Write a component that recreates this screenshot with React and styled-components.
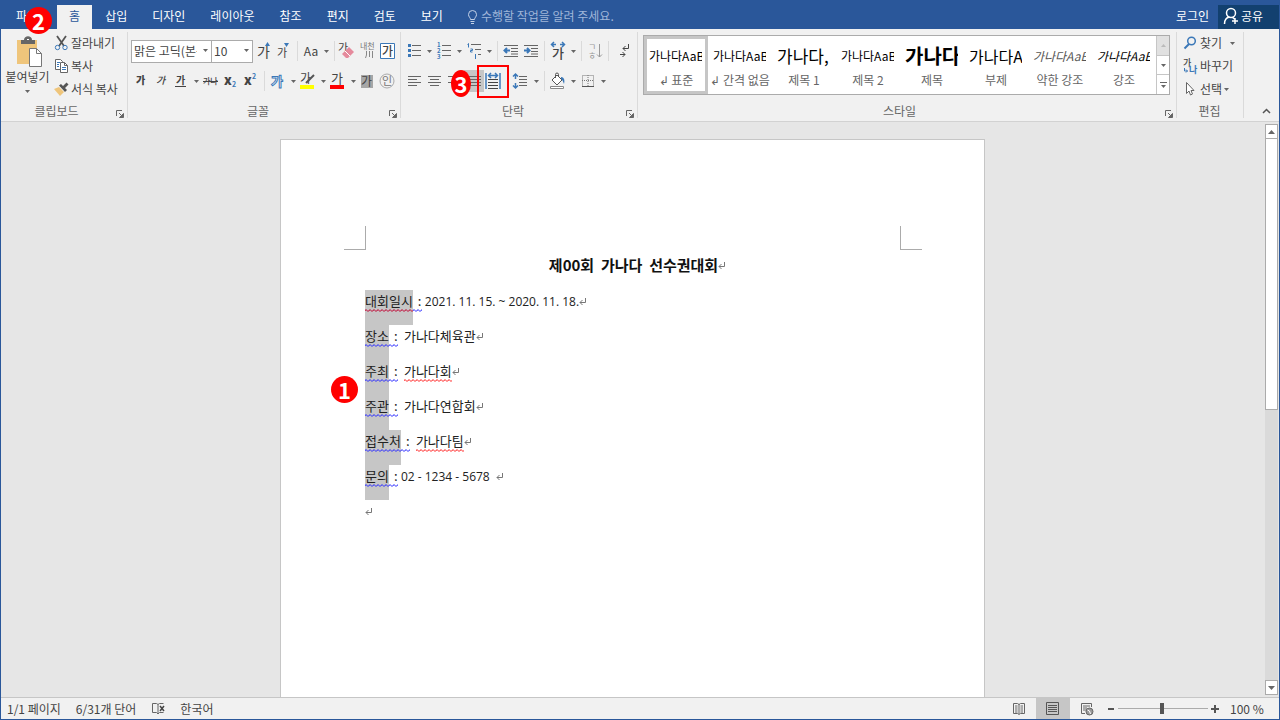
import styled, { createGlobalStyle } from 'styled-components'

const GlobalStyle = createGlobalStyle`
  * {
    box-sizing: border-box;
  }
  body {
    margin: 0;
    font-family: 'Noto Sans CJK KR', 'Open Sans', sans-serif;
    font-size: 12px;
    line-height: 16px;
    color: #444;
  }
  button, select, input {
    font: inherit;
    color: inherit;
  }
  button {
    display: flex;
    align-items: center;
    justify-content: center;
    border: 0;
    padding: 0;
    background: none;
    white-space: nowrap;
  }
`

const BLUE = '#3b78b8'

/* ---------- window ---------- */

const Window = styled.div`
  display: flex;
  flex-direction: column;
  height: 100vh;
  border: 1px solid #2a579a;
  border-top: 0;
  background: #e6e6e6;
  overflow: hidden;
`

const TabBar = styled.nav`
  display: flex;
  align-items: stretch;
  gap: 1px;
  height: 29px;
  padding-top: 5px;
  flex: none;
  background: #2a579a;
  color: #fff;

  button {
    padding-bottom: 2px;
  }
`

const Tab = styled.button`
  position: relative;
  padding: ${p => (p.$file ? '0 18px 0 15px' : '0 12px')};
  background: ${p => (p.$active ? '#f1f1f1' : 'transparent')};
  color: ${p => (p.$active ? '#2a579a' : '#fff')};
`

const TellMe = styled.button`
  gap: 3px;
  padding: 0 11px;
  color: #a0b6d9;
`

const Login = styled.button`
  margin-left: auto;
  padding: 0 8px;
`

const Share = styled.button`
  justify-content: flex-start;
  gap: 2px;
  width: 61px;
  padding-left: 5px;
  background: #12406f;
`

const Badge = styled.span`
  position: absolute;
  z-index: 2;
  left: ${p => p.$left}px;
  top: ${p => p.$top}px;
  width: ${p => p.$width || 27}px;
  height: 27px;
  border-radius: 50%;
  background: #f00;
  color: #fff;
  font-size: 22px;
  font-weight: 700;
  line-height: 27px;
  text-align: center;
`

/* ---------- ribbon ---------- */

const Ribbon = styled.header`
  display: flex;
  flex: none;
  height: 93px;
  padding: 3px 0;
  background: #f1f1f1;
  border-bottom: 1px solid #d2d2d2;
`

const Group = styled.section`
  display: flex;
  flex-direction: column;
  flex: ${p => (p.$grow ? '1 1 0' : 'none')};
  width: ${p => (p.$width ? p.$width + 'px' : 'auto')};
  min-width: 0;
  padding-left: ${p => p.$pad || 0}px;
  border-right: 1px solid #dadada;
`

const GroupBody = styled.div`
  display: flex;
  flex: 1;
  min-height: 0;
`

const GroupFooter = styled.div`
  display: flex;
  align-items: center;
  height: 16px;
  padding: 2px 3px 0 0;
  color: #666;

  button {
    align-self: flex-end;
  }
`

const GroupTitle = styled.span`
  flex: 1;
  padding-right: 4px;
  text-align: center;
`

const ToolRows = styled.div`
  display: flex;
  flex-direction: column;
  gap: 8px;
  padding-top: 8px;
`

const ToolRow = styled.div`
  display: flex;
  align-items: center;
  height: 22px;
`

const Tool = styled.button`
  position: relative;
  width: 20px;
  height: 22px;
  background: ${p => (p.$pressed ? '#c6c6c6' : 'transparent')};
`

const DropButton = styled.button`
  width: 10px;
  height: 22px;
`

const Divider = styled.span`
  width: 1px;
  height: 20px;
  margin: 0 3px;
  background: #dadada;
`

const SelectBox = styled.span`
  position: relative;
  width: ${p => p.$width}px;
  margin-right: ${p => (p.$joined ? -1 : 1)}px;

  svg {
    position: absolute;
    right: 4px;
    top: 9px;
    pointer-events: none;
  }
`

const Select = styled.select`
  appearance: none;
  display: block;
  width: 100%;
  height: 23px;
  padding: 0 14px 0 2px;
  border: 1px solid #ababab;
  border-radius: 0;
  background: #fff;
  overflow: hidden;
`

const PasteButton = styled.button`
  flex-direction: column;
  justify-content: flex-start;
  width: 53px;
  padding-top: 4px;
`

const ActionList = styled.div`
  display: flex;
  flex-direction: column;
  gap: 1px;
`

const Action = styled.button`
  justify-content: flex-start;
  gap: 2px;
  height: 22px;

  svg:last-child {
    margin-left: ${p => p.$arrowGap || 0}px;
  }
`

const MarkedTool = styled.span`
  position: relative;
  display: flex;
`

const MarkFrame = styled.span`
  position: absolute;
  z-index: 1;
  left: -7px;
  top: -5px;
  width: 32px;
  height: 33px;
  border: 2px solid #f00;
  pointer-events: none;
`

/* ---------- style gallery ---------- */

const Gallery = styled.div`
  display: flex;
  flex: 1;
  height: 60px;
  min-width: 0;
  margin: 3px 6px 0 5px;
  border: 1px solid #ababab;
  background: #fff;
`

const GalleryItems = styled.div`
  display: flex;
  flex: 1;
  min-width: 0;
  overflow: hidden;
`

const StyleCard = styled.button`
  flex-direction: column;
  justify-content: flex-start;
  flex: none;
  width: 64px;
  padding-top: 1px;
  border: 3px solid ${p => (p.$selected ? '#c6c6c6' : 'transparent')};
`

const Preview = styled.span`
  align-self: flex-start;
  width: 53px;
  height: 32px;
  margin-left: 2px;
  overflow: hidden;
  text-align: left;
  line-height: 32px;
  color: ${p => p.$color || '#000'};
  font-size: ${p => p.$size || 12}px;
  font-weight: ${p => (p.$bold ? 700 : 400)};
  font-style: ${p => (p.$italic ? 'italic' : 'normal')};
`

const StyleName = styled.span`
  color: #666;
`

const GalleryScroll = styled.div`
  display: flex;
  flex-direction: column;
  width: 13px;
  border-left: 1px solid #c6c6c6;

  button {
    flex: 1;
  }
  button:first-child {
    background: #e1e1e1;
  }
  button + button {
    border-top: 1px solid #c6c6c6;
  }
`

const Collapse = styled.button`
  align-self: flex-end;
  width: 35px;
  height: 14px;
  padding-left: 10px;
`

/* ---------- document ---------- */

const Workspace = styled.main`
  display: flex;
  flex: 1;
  min-height: 0;
`

const Canvas = styled.div`
  display: flex;
  flex: 1;
  justify-content: center;
  padding-top: 17px;
  overflow: hidden;
`

const Page = styled.article`
  width: 705px;
  border: 1px solid #c6c6c6;
  border-bottom: 0;
  background: #fff;
  color: #222;
`

const CropMarks = styled.div`
  display: flex;
  justify-content: space-between;
  padding: 86px 62px 0 63px;
`

const CropMark = styled.span`
  width: 22px;
  height: 24px;
  border-bottom: 1px solid #ababab;
  border-${p => p.$side}: 1px solid #ababab;
`

const PageTitle = styled.h1`
  display: flex;
  justify-content: center;
  margin: 0 0 10px;
  padding-left: 10px;
  font-size: 15px;
  font-weight: 700;
  line-height: 30px;
  white-space: pre;
  color: #111;

  svg {
    margin-top: 12px;
  }
`

const Lines = styled.div`
  position: relative;
  padding: 0 84px;
`

const Line = styled.p`
  display: flex;
  height: 35px;
  margin: 0;
  font-size: 13px;
  line-height: 22px;
  white-space: pre;
`

const Label = styled.span`
  height: 35px;
  background: #c6c6c6;
`

// zigzag proofing underline
const wave = color =>
  `url("data:image/svg+xml,${encodeURIComponent(
    `<svg xmlns="http://www.w3.org/2000/svg" width="4" height="3"><path d="M-1 3L1 .5 3 2.500 5 .5" fill="none" stroke="${color}"/></svg>`
  )}")`

const Proof = styled.span`
  display: block;
  height: 22px;
  background: ${p => wave(p.$color)} 0 100% repeat-x;
`

const Colon = styled(Proof)`
  width: 9px;
  padding-left: 5px;
  margin-right: ${p => p.$gap}px;
`

const Value = styled.span`
  font-family: ${p => (p.$digits ? "'Open Sans', sans-serif" : 'inherit')};
  font-size: ${p => (p.$digits ? 12 : 13)}px;
  line-height: ${p => (p.$digits ? 24 : 22)}px;
`

const ParagraphMark = styled.svg`
  flex: none;
  align-self: flex-start;
  display: inline-block;
  margin-top: 8px;
`

/* ---------- scrollbar and status bar ---------- */

const ScrollBar = styled.div`
  display: flex;
  flex-direction: column;
  width: 15px;
  padding: 2px 1px;

  button {
    height: 15px;
    border: 1px solid #ababab;
    background: #fff;
  }
`

const ScrollTrack = styled.div`
  flex: 1;
  background: #dadada;
`

const ScrollThumb = styled.div`
  height: 50%;
  border: 1px solid #ababab;
  border-top: 0;
  background: #fff;
`

const StatusBar = styled.footer`
  display: flex;
  align-items: center;
  flex: none;
  height: 22px;
  padding-left: 6px;
  border-top: 1px solid #c6c6c6;
  background: #f1f1f1;
`

const StatusItem = styled.span`
  margin-right: 15px;
`

const ProofButton = styled.button`
  margin-right: 14px;
`

const Views = styled.div`
  display: flex;
  align-self: stretch;
  margin-left: auto;
`

const ViewButton = styled.button`
  width: 34px;
  background: ${p => (p.$active ? '#c6c6c6' : 'transparent')};
`

const Zoom = styled.div`
  display: flex;
  align-items: center;
  gap: 2px;
  margin-left: 2px;
`

const ZoomStep = styled.button`
  width: 10px;
  height: 16px;
`

const ZoomSlider = styled.input`
  appearance: none;
  width: 90px;
  height: 12px;
  margin: 0;
  background: linear-gradient(#ababab, #ababab) center / 100% 1px no-repeat;

  &::-webkit-slider-thumb {
    appearance: none;
    width: 4px;
    height: 11px;
    background: #555;
  }
`

const ZoomValue = styled.span`
  width: 57px;
  padding-left: 8px;
`

/* ---------- icons ---------- */

const Icon = ({ size = 20, w, h, children }) => (
  <svg width={w || size} height={h || size} viewBox={`0 0 ${w || size} ${h || size}`} fill="none" stroke="#666" overflow="visible" aria-hidden="true">
    {children}
  </svg>
)

const Glyph = ({ x, y, size = 12, color = '#444', weight = 400, children, ...rest }) => (
  <text x={x} y={y} fontSize={size} fill={color} stroke="none" fontWeight={weight} {...rest}>{children}</text>
)

const Arrow = ({ up, large, color = '#666' }) => (
  <svg width={large ? 7 : 5} height={large ? 4 : 3} viewBox="0 0 5 3" preserveAspectRatio="none" aria-hidden="true">
    <path d={up ? 'M0 3h5L2.5 0z' : 'M0 0h5L2.5 3z'} fill={color} />
  </svg>
)

const Launcher = () => (
  <Icon size={8}>
    <path d="M.5 6V.5H6" />
    <path d="M3 3l3 3" />
    <path d="M7.500 3.500v4h-4z" fill="#666" />
  </Icon>
)

const Return = () => (
  <ParagraphMark width="8" height="8" viewBox="0 0 8 8" fill="none" stroke="#777" aria-hidden="true">
    <path d="M6.500 0v4.500H1M3.500 2L1 4.500 3.500 7" />
  </ParagraphMark>
)

const PasteIcon = () => (
  <Icon w={31} h={33}>
    <path d="M5 4h20v24H5z" fill="#efc57b" stroke="none" />
    <path d="M9 8V4h3c0-5 8-5 8 0h3v4z" fill="#666" stroke="none" />
    <path d="M15 3.500h2" stroke="#fff" />
    <path d="M17.500 12.500h7l5 5v13h-12z" fill="#fff" stroke="#777" />
    <path d="M24.500 12.500v5h5" stroke="#777" />
  </Icon>
)

const CutIcon = () => (
  <Icon w={15} h={16}>
    <path d="M3 1l7 10M12 1L5 11" stroke="#555" strokeWidth="1.800" />
    <circle cx="3.500" cy="12.500" r="2.200" stroke={BLUE} />
    <circle cx="11" cy="12.500" r="2.200" stroke={BLUE} />
  </Icon>
)

const CopyIcon = () => (
  <Icon w={15} h={16}>
    <path d="M1.500 1.500h5l2 2v8h-7z" fill="#fff" />
    <path d="M6.500 4.500h4l3 3v7h-7z" fill="#fff" />
    <path d="M10.500 4.500v3h3" />
    <path d="M3 4.500h3M3 6.500h2M3 8.500h2M8 9.500h4M8 11.500h4" stroke={BLUE} />
  </Icon>
)

const BrushIcon = () => (
  <Icon w={15} h={16}>
    <path d="M0 8l5-2 5 5-4 4z" fill="#efc57b" stroke="none" />
    <path d="M5 4.500L11 11l2-2-2-2 3.500-3.500L12.500 1.500 9 5 7 3z" fill="#555" stroke="none" />
  </Icon>
)

const Bulb = () => (
  <Icon w={11} h={15}>
    <path d="M3.500 10.500c0-2-2-2.500-2-5a4 4 0 018 0c0 2.500-2 3-2 5zM3.500 12.500h4M4 14.500h3" stroke="#c3d1e7" />
  </Icon>
)

const PersonIcon = () => (
  <Icon w={16} h={18}>
    <circle cx="8" cy="6" r="4.500" stroke="#fff" strokeWidth="1.500" />
    <path d="M1.500 17c0-4 2-6.500 5-7M9.500 10.500c1 .3 1.500.8 2 1.500M12 11v6M9 14h6" stroke="#fff" strokeWidth="1.500" />
  </Icon>
)

const AlignIcon = ({ rows }) => (
  <Icon>
    {rows.map(([from, to], i) => (
      <path key={i} d={`M${from} ${5.5 + i * 3}H${to}`} />
    ))}
  </Icon>
)

const ListIcon = ({ kind }) => (
  <Icon>
    {kind === 'bullet' && (
      <>
        <path d="M8 4.500h9M8 9.500h9M8 14.500h9" />
        <path d="M4 4.500h3M4 9.500h3M4 14.500h3" stroke={BLUE} strokeWidth="3" />
      </>
    )}
    {kind === 'number' && (
      <>
        <path d="M8 4.500h9M8 9.500h9M8 14.500h9" />
        <Glyph x="3" y="6" size={6} color={BLUE} weight={700}>1</Glyph>
        <Glyph x="3" y="12" size={6} color={BLUE} weight={700}>2</Glyph>
        <Glyph x="3" y="18" size={6} color={BLUE} weight={700}>3</Glyph>
      </>
    )}
    {kind === 'multi' && (
      <>
        <path d="M7 3.500h10M11 8.500h6M14 13.500h3" />
        <path d="M3.500 3.500l1-1v4M6.500 8h2v1.500h-2v1.500h2M11.500 13v5" stroke={BLUE} />
      </>
    )}
  </Icon>
)

const IndentIcon = ({ out }) => (
  <Icon>
    <path d="M3 4.500h14M10 7.500h7M10 10.500h7M10 13h7M3 15.500h14" />
    <path d={out ? 'M9 9.500H4M6 7L3.500 9.500 6 12' : 'M3 9.500h5M6 7l2.500 2.500L6 12'} stroke={BLUE} strokeWidth="2" />
  </Icon>
)

const Drop = ({ label }) => (
  <DropButton aria-label={label}><Arrow /></DropButton>
)

/* ---------- groups ---------- */

const Footer = ({ title, launcher = true }) => (
  <GroupFooter>
    <GroupTitle>{title}</GroupTitle>
    {launcher && <button aria-label={title + ' 설정'}><Launcher /></button>}
  </GroupFooter>
)

const ClipboardGroup = () => (
  <Group $width={127}>
    <GroupBody>
      <PasteButton>
        <PasteIcon />
        붙여넣기
        <Icon w={5} h={10}><path d="M0 5h5L2.500 8z" fill="#666" stroke="none" /></Icon>
      </PasteButton>
      <ActionList>
        <Action><CutIcon />잘라내기</Action>
        <Action><CopyIcon />복사</Action>
        <Action><BrushIcon />서식 복사</Action>
      </ActionList>
    </GroupBody>
    <Footer title="클립보드" />
  </Group>
)

const FontGroup = () => (
  <Group $width={273} $pad={3}>
    <GroupBody>
      <ToolRows>
        <ToolRow>
          <SelectBox $width={81} $joined>
            <Select aria-label="글꼴"><option>맑은 고딕(본문)</option></Select>
            <Arrow />
          </SelectBox>
          <SelectBox $width={42}>
            <Select aria-label="글꼴 크기"><option>10</option></Select>
            <Arrow />
          </SelectBox>
          <Tool aria-label="글꼴 크게">
            <Icon><Glyph x="3" y="16" size={14}>가</Glyph><path d="M11 5h5l-2.500-4z" fill={BLUE} stroke="none" /></Icon>
          </Tool>
          <Tool aria-label="글꼴 작게">
            <Icon><Glyph x="3" y="16" size={11}>가</Glyph><path d="M10 2h5l-2.500 4z" fill={BLUE} stroke="none" /></Icon>
          </Tool>
          <Divider />
          <Tool aria-label="대/소문자 바꾸기">Aa</Tool>
          <Drop label="대/소문자 옵션" />
          <Divider />
          <Tool aria-label="서식 지우기">
            <Icon>
              <Glyph x="0" y="11" size={11}>가</Glyph>
              <path d="M4 13l7-7 5 5-6 6H8l-4-4z" fill="#e58a9c" stroke="none" />
              <path d="M7 10l5 5" stroke="#fff" />
            </Icon>
          </Tool>
          <Tool aria-label="윗주 달기">
            <Icon><Glyph x="2" y="8" size={8} color="#777">내천</Glyph><path d="M8.500 10v4l-1 3M11.500 10v6M14.500 10v7" stroke="#888" /></Icon>
          </Tool>
          <Tool aria-label="문자 테두리">
            <Icon><path d="M2.500 2.500h14v15h-14z" fill="#fff" stroke={BLUE} /><Glyph x="4" y="15" size={12} weight={500}>가</Glyph></Icon>
          </Tool>
        </ToolRow>
        <ToolRow>
          <Tool aria-label="굵게"><Icon><Glyph x="5" y="13" size={10} weight={900}>가</Glyph></Icon></Tool>
          <Tool aria-label="기울임꼴"><Icon><Glyph x="5" y="13" size={10} weight={500} fontStyle="italic">가</Glyph></Icon></Tool>
          <Tool aria-label="밑줄">
            <Icon><Glyph x="5" y="13" size={10} weight={700}>가</Glyph><path d="M4 15.500h11" stroke="#444" /></Icon>
          </Tool>
          <Drop label="밑줄 옵션" />
          <Tool aria-label="취소선">
            <Icon><Glyph x="2" y="13" size={8} weight={500}>가나</Glyph><path d="M2 10.500h15" stroke="#444" /></Icon>
          </Tool>
          <Tool aria-label="아래 첨자">
            <Icon><Glyph x="3" y="14" size={13} weight={900}>x</Glyph><Glyph x="11" y="16" size={7} weight={700} color={BLUE}>2</Glyph></Icon>
          </Tool>
          <Tool aria-label="위 첨자">
            <Icon><Glyph x="3" y="14" size={13} weight={900}>x</Glyph><Glyph x="11" y="8" size={7} weight={700} color={BLUE}>2</Glyph></Icon>
          </Tool>
          <Divider />
          <Tool aria-label="텍스트 효과">
            <Icon><text x="3" y="15" fontSize="13" fontWeight="700" fill="#fff" stroke={BLUE}>가</text></Icon>
          </Tool>
          <Drop label="텍스트 효과 옵션" />
          <Tool aria-label="텍스트 강조 색">
            <Icon>
              <Glyph x="2" y="12" size={12}>가</Glyph>
              <path d="M8 12l8-8" stroke="#555" strokeWidth="2" />
              <path d="M2 14h14v4H2z" fill="#ff0" stroke="none" />
            </Icon>
          </Tool>
          <Drop label="강조 색 옵션" />
          <Tool aria-label="글꼴 색">
            <Icon><Glyph x="3" y="12" size={13}>가</Glyph><path d="M2 14h14v4H2z" fill="#f00" stroke="none" /></Icon>
          </Tool>
          <Drop label="글꼴 색 옵션" />
          <Tool aria-label="문자 음영">
            <Icon><path d="M3 4h12v13H3z" fill="#a6a6a6" stroke="none" /><Glyph x="3" y="15" size={12}>가</Glyph></Icon>
          </Tool>
          <Tool aria-label="원 문자">
            <Icon><circle cx="9" cy="10" r="7" stroke="#aaa" /><Glyph x="4" y="14" size={11} color="#777">인</Glyph></Icon>
          </Tool>
        </ToolRow>
      </ToolRows>
    </GroupBody>
    <Footer title="글꼴" />
  </Group>
)

const ParagraphGroup = () => (
  <Group $width={237} $pad={3}>
    <GroupBody>
      <ToolRows>
        <ToolRow>
          <Tool aria-label="글머리 기호"><ListIcon kind="bullet" /></Tool>
          <Drop label="글머리 기호 옵션" />
          <Tool aria-label="번호 매기기"><ListIcon kind="number" /></Tool>
          <Drop label="번호 옵션" />
          <Tool aria-label="다단계 목록"><ListIcon kind="multi" /></Tool>
          <Drop label="다단계 옵션" />
          <Divider />
          <Tool aria-label="내어쓰기"><IndentIcon out /></Tool>
          <Tool aria-label="들여쓰기"><IndentIcon /></Tool>
          <Divider />
          <Tool aria-label="한글 입력 체계">
            <Icon>
              <Glyph x="4" y="17" size={13} weight={500}>가</Glyph>
              <path d="M8 3.500H4M6 1L3.500 3.500 6 6M12 3.500h4M14 1l2.500 2.500L14 6" stroke={BLUE} strokeWidth="1.500" />
            </Icon>
          </Tool>
          <Drop label="한글 입력 체계 옵션" />
          <Divider />
          <Tool aria-label="정렬">
            <Icon>
              <Glyph x="3" y="9" size={9} color="#999">ㄱ</Glyph>
              <Glyph x="3" y="18" size={9} color="#999">ㅎ</Glyph>
              <path d="M14.500 3v13M12 13.500l2.500 2.500 2.500-2.500" stroke="#999" />
            </Icon>
          </Tool>
          <Divider />
          <Tool aria-label="편집 기호 표시">
            <Icon><path d="M16.500 3v4.500H11M13.500 5L11 7.500l2.500 2.500M8 13.500h5M10.500 11l2.500 2.500-2.500 2.500" stroke="#444" /></Icon>
          </Tool>
        </ToolRow>
        <ToolRow>
          <Tool aria-label="왼쪽 맞춤"><AlignIcon rows={[[4, 17], [4, 13], [4, 17], [4, 13]]} /></Tool>
          <Tool aria-label="가운데 맞춤"><AlignIcon rows={[[4, 17], [6, 15], [4, 17], [6, 15]]} /></Tool>
          <Tool aria-label="오른쪽 맞춤"><AlignIcon rows={[[4, 17], [8, 17], [4, 17], [8, 17]]} /></Tool>
          <Tool $pressed aria-label="양쪽 맞춤"><AlignIcon rows={[[4, 17], [4, 17], [4, 17], [4, 17]]} /></Tool>
          <MarkedTool>
            <Tool aria-label="균등 분할">
              <Icon>
                <path d="M2 2v16M16 2v16M5 4.500h8M7 2L4.500 4.500 7 7M11 2l2.500 2.500L11 7" stroke={BLUE} strokeWidth="1.500" />
                <path d="M4 8.500h10M4 11.500h10M4 14.500h10M4 17.500h10" stroke="#444" />
              </Icon>
            </Tool>
            <MarkFrame />
            <Badge $left={-33} $top={0} $width={20}>3</Badge>
          </MarkedTool>
          <Divider />
          <Tool aria-label="줄 간격">
            <Icon>
              <path d="M8 5.500h8M8 8.500h8M8 11.500h8M8 14.500h8" />
              <path d="M4.500 3v5M2 5.500L4.500 3 7 5.500M4.500 12v5M2 14.500L4.500 17 7 14.500" stroke={BLUE} strokeWidth="1.500" />
            </Icon>
          </Tool>
          <Drop label="줄 간격 옵션" />
          <Divider />
          <Tool aria-label="음영">
            <Icon>
              <path d="M4 9l5-5 5 5-5 5z" fill="#fff" stroke="#555" />
              <path d="M7.500 7V3.500a1.500 1.500 0 013 0V6" stroke="#555" />
              <path d="M13 6c3 0 4 3 3 7-1-2-1-4-3-5z" fill={BLUE} stroke="none" />
              <path d="M2.500 15.500h13v2h-13z" stroke="#888" fill="#fff" />
            </Icon>
          </Tool>
          <Drop label="음영 옵션" />
          <Tool aria-label="테두리">
            <Icon>
              <path d="M4.500 4.500h11v11h-11zM10 4v11M4 9.500h12" stroke="#777" strokeDasharray="1 1" />
              <path d="M4 15.500h12" stroke="#555" />
            </Icon>
          </Tool>
          <Drop label="테두리 옵션" />
        </ToolRow>
      </ToolRows>
    </GroupBody>
    <Footer title="단락" />
  </Group>
)

const styles = [
  { name: '↲ 표준', sample: '가나다AaBb', selected: true },
  { name: '↲ 간격 없음', sample: '가나다AaBb' },
  { name: '제목 1', sample: '가나다,', size: 17 },
  { name: '제목 2', sample: '가나다AaBb' },
  { name: '제목', sample: '가나다', size: 20, bold: true },
  { name: '부제', sample: '가나다A', size: 16 },
  { name: '약한 강조', sample: '가나다AaBb', italic: true, color: '#555' },
  { name: '강조', sample: '가나다AaBb', italic: true },
]

const StylesGroup = () => (
  <Group $grow>
    <GroupBody>
      <Gallery>
        <GalleryItems>
          {styles.map(s => (
            <StyleCard key={s.name} $selected={s.selected}>
              <Preview $size={s.size} $bold={s.bold} $italic={s.italic} $color={s.color}>{s.sample}</Preview>
              <StyleName>{s.name}</StyleName>
            </StyleCard>
          ))}
        </GalleryItems>
        <GalleryScroll>
          <button aria-label="위로"><Arrow up color="#bbb" /></button>
          <button aria-label="아래로"><Arrow /></button>
          <button aria-label="자세히">
            <Icon w={7} h={8}><path d="M0 1.500h7" /><path d="M1 4h5L3.500 7z" fill="#666" stroke="none" /></Icon>
          </button>
        </GalleryScroll>
      </Gallery>
    </GroupBody>
    <Footer title="스타일" />
  </Group>
)

const EditGroup = () => (
  <Group $width={67} $pad={6}>
    <GroupBody>
      <ActionList>
        <Action $arrowGap={6}>
          <Icon w={15} h={16}>
            <circle cx="8.500" cy="6" r="3.800" stroke={BLUE} strokeWidth="1.500" />
            <path d="M6 9l-4.500 4.500" stroke={BLUE} strokeWidth="2" />
          </Icon>
          찾기
          <Arrow />
        </Action>
        <Action>
          <Icon w={15} h={16}>
            <Glyph x="0" y="8" size={9} weight={500}>가</Glyph>
            <Glyph x="6" y="15" size={9} weight={700} color={BLUE}>나</Glyph>
            <path d="M1.500 10v3h3M3 11.500L4.500 13 3 14.500" stroke={BLUE} />
          </Icon>
          <span>바꾸기</span>
        </Action>
        <Action>
          <Icon w={15} h={16}><path d="M3.500 1.500v11l2.500-2.500 1.500 4 2-1L8 9.500h3z" fill="#fff" /></Icon>
          선택
          <Arrow />
        </Action>
      </ActionList>
    </GroupBody>
    <Footer title="편집" launcher={false} />
  </Group>
)

/* ---------- document content ---------- */

const lines = [
  { label: '대회일시', value: '2021. 11. 15. ~ 2020. 11. 18.', digits: true, spelling: '#c00030' },
  { label: '장소', value: '가나다체육관' },
  { label: '주최', value: '가나다회', wrong: true },
  { label: '주관', value: '가나다연합회' },
  { label: '접수처', value: '가나다팀', wrong: true },
  { label: '문의', value: '02 - 1234 - 5678  ', digits: true },
]

const GRAMMAR = '#2b2bff'

const tabs = ['홈', '삽입', '디자인', '레이아웃', '참조', '편지', '검토', '보기']

const App = () => (
  <>
    <GlobalStyle />
    <Window>
      <TabBar>
        <Tab $file>
          파일
          <Badge $left={24} $top={2}>2</Badge>
        </Tab>
        {tabs.map(t => <Tab key={t} $active={t === '홈'}>{t}</Tab>)}
        <TellMe><Bulb />수행할 작업을 알려 주세요.</TellMe>
        <Login>로그인</Login>
        <Share><PersonIcon />공유</Share>
      </TabBar>

      <Ribbon>
        <ClipboardGroup />
        <FontGroup />
        <ParagraphGroup />
        <StylesGroup />
        <EditGroup />
        <Collapse aria-label="리본 메뉴 축소">
          <Icon w={9} h={6}><path d="M1 5l3.500-3.500L8 5" stroke="#555" strokeWidth="1.500" /></Icon>
        </Collapse>
      </Ribbon>

      <Workspace>
        <Canvas>
          <Page>
            <CropMarks>
              <CropMark $side="right" />
              <CropMark $side="left" />
            </CropMarks>
            <PageTitle>제00회  가나다  선수권대회<Return /></PageTitle>
            <Lines>
              <Badge $left={50} $top={86}>1</Badge>
              {lines.map(l => (
                <Line key={l.label}>
                  <Label><Proof $color={l.spelling || GRAMMAR}>{l.label}</Proof></Label>
                  <Colon $color={GRAMMAR} $gap={l.digits ? 3 : 6}>:</Colon>
                  <Value $digits={l.digits}>
                    {l.wrong ? <Proof $color="#f22">{l.value}</Proof> : l.value}
                  </Value>
                  <Return />
                </Line>
              ))}
              <Line><Return /></Line>
            </Lines>
          </Page>
        </Canvas>
        <ScrollBar>
          <button aria-label="위로 스크롤"><Arrow up large /></button>
          <ScrollTrack><ScrollThumb /></ScrollTrack>
          <button aria-label="아래로 스크롤"><Arrow large /></button>
        </ScrollBar>
      </Workspace>

      <StatusBar>
        <StatusItem>1/1 페이지</StatusItem>
        <StatusItem>6/31개 단어</StatusItem>
        <ProofButton aria-label="맞춤법 검사">
          <Icon w={15} h={14}>
            <path d="M7 2.500L5.500 1.500h-4v9h4L7 12l1.500-1.500h4M7 2.500V12M7 2.500l1.500-1h4" />
            <path d="M9 4l4 5M13 4L9 9" stroke="#444" strokeWidth="1.500" />
          </Icon>
        </ProofButton>
        <StatusItem>한국어</StatusItem>
        <Views>
          <ViewButton aria-label="읽기 모드">
            <Icon w={14} h={14}>
              <path d="M7 2.500L5.500 1.500h-4v10h4L7 12.500l1.500-1h4v-10h-4zM7 2v10" />
              <path d="M3 4h2.500M3 6h2.500M3 8h2.500M3 10h2.500M8.500 4H11M8.500 6H11M8.500 8H11M8.500 10H11" />
            </Icon>
          </ViewButton>
          <ViewButton $active aria-label="인쇄 모양">
            <Icon w={14} h={14}><path d="M.5.5h12v12H.5zM2 3.500h9M2 5.500h9M2 7.500h9M2 9.500h9" stroke="#555" /></Icon>
          </ViewButton>
          <ViewButton aria-label="웹 모양">
            <Icon w={14} h={14}>
              <path d="M5 11.500H1.500v-10h10V5M3 4h7M3 6h4M3 8h3" />
              <circle cx="9.500" cy="9.500" r="3.500" fill="#999" />
              <path d="M7.500 8l2 1 1 3" stroke="#fff" />
            </Icon>
          </ViewButton>
        </Views>
        <Zoom>
          <ZoomStep aria-label="축소"><Icon w={6} h={2}><path d="M0 1h6" stroke="#555" strokeWidth="2" /></Icon></ZoomStep>
          <ZoomSlider type="range" min="0" max="100" defaultValue="49" aria-label="확대/축소" />
          <ZoomStep aria-label="확대"><Icon w={8} h={8}><path d="M0 4h8M4 0v8" stroke="#555" strokeWidth="2" /></Icon></ZoomStep>
          <ZoomValue>100 %</ZoomValue>
        </Zoom>
      </StatusBar>
    </Window>
  </>
)

export default App
